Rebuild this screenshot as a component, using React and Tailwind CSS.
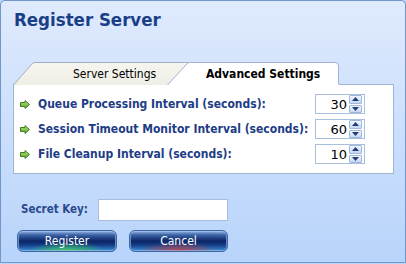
import React from "react";

const font = { fontFamily: '"DejaVu Sans Condensed", "DejaVu Sans", sans-serif' };

function Arrow() {
  return (
    <svg width="10" height="9" viewBox="0 0 10 9" className="shrink-0">
      <defs>
        <linearGradient id="ag" x1="0" y1="0" x2="0" y2="1">
          <stop offset="0" stopColor="#b5e27a" />
          <stop offset="1" stopColor="#5fa82c" />
        </linearGradient>
      </defs>
      <path d="M0.5 2.5 H5 V0.5 L9.5 4.5 L5 8.5 V6.5 H0.5 Z" fill="url(#ag)" stroke="#3f7d22" strokeWidth="1" strokeLinejoin="round" />
    </svg>
  );
}

function Spinner({ value }) {
  return (
    <div className="ml-auto mr-[28px] flex h-[20px] w-[50px] items-center border border-[#a9bfdb] bg-white">
      <div className="flex-1 pr-[2px] text-right text-[13px] leading-none text-black" style={{ fontFamily: '"DejaVu Sans", sans-serif' }}>
        {value}
      </div>
      <div className="mr-[2px] flex h-[18px] w-[13px] flex-col gap-[1px]">
        <div className="flex flex-1 items-center justify-center rounded-[1px] border border-[#9fb8dc] bg-gradient-to-b from-[#f1f6fd] to-[#c5d8f3]">
          <svg width="7" height="4" viewBox="0 0 7 4"><path d="M0 4 L3.5 0 L7 4 Z" fill="#1f3b7a" /></svg>
        </div>
        <div className="flex flex-1 items-center justify-center rounded-[1px] border border-[#9fb8dc] bg-gradient-to-b from-[#f1f6fd] to-[#c5d8f3]">
          <svg width="7" height="4" viewBox="0 0 7 4"><path d="M0 0 L3.5 4 L7 0 Z" fill="#1f3b7a" /></svg>
        </div>
      </div>
    </div>
  );
}

function Row({ label, value }) {
  return (
    <div className="flex h-[20px] items-center pl-[6px]">
      <Arrow />
      <span className="ml-[8px] text-[12px] font-bold text-[#1d3c86]" style={font}>{label}</span>
      <Spinner value={value} />
    </div>
  );
}

function GlassButton({ children, glow, width }) {
  return (
    <button
      className={`flex h-[22px] items-center justify-center rounded-[6px] border border-[#3f64a3] text-[12px] text-white shadow-[inset_0_0_0_1px_rgba(170,200,240,0.6)] ${width} ${glow}`}
      style={{ fontFamily: '"DejaVu Sans Condensed", "DejaVu Sans", sans-serif' }}
    >
      {children}
    </button>
  );
}

export default function App() {
  return (
    <div className="h-[264px] w-[406px] overflow-hidden bg-[#b9d5fb]">
      <div className="flex h-[263px] w-[406px] flex-col rounded-t-[5px] border border-[#7196ca] bg-gradient-to-b from-[#dfeafd] to-[#b8d4fb]">
        <div className="pl-[13px] pt-[7px] text-[18.5px] font-bold leading-[24px] text-[#1b3e88]" style={font}>
          Register Server
        </div>
        <div className="mt-[30px] px-[12px]">
          <div className="relative z-10 -mb-[1px] flex h-[23px]">
            <div className="relative h-[23px] w-[176px]">
              <svg className="absolute left-0 top-0" width="176" height="23" viewBox="0 0 176 23">
                <defs>
                  <linearGradient id="tg" x1="0" y1="0" x2="0" y2="1">
                    <stop offset="0" stopColor="#f6f5ef" />
                    <stop offset="1" stopColor="#efeee6" />
                  </linearGradient>
                </defs>
                <path d="M0.5 23 L19 1.8 Q20 0.5 22 0.5 L175.5 0.5 L175.5 23" fill="url(#tg)" stroke="#a2b0c4" />
              </svg>
              <span className="relative block pl-[60px] pt-[5px] text-[12px] leading-[14px] text-black" style={font}>
                Server Settings
              </span>
            </div>
            <div className="relative -ml-[22px] h-[23px] w-[173px]">
              <svg className="absolute left-0 top-0" width="173" height="23" viewBox="0 0 173 23">
                <path d="M0 23 L20 1.8 Q21 0.5 23 0.5 L168 0.5 Q171.5 0.5 171.5 4 L171.5 23 Z" fill="#ffffff" stroke="none" />
                <path d="M0.5 23 L20 1.8 Q21 0.5 23 0.5 L168 0.5 Q171.5 0.5 171.5 4 L171.5 22" fill="none" stroke="#9db4d4" />
              </svg>
              <span className="relative block pl-[39px] pt-[5px] text-[12px] font-bold leading-[14px] text-black" style={font}>
                Advanced Settings
              </span>
            </div>
          </div>
          <div className="flex h-[90px] w-[381px] flex-col gap-[5px] border border-[#9db4d4] bg-white pt-[9px]">
            <Row label="Queue Processing Interval (seconds):" value="30" />
            <Row label="Session Timeout Monitor Interval (seconds):" value="60" />
            <Row label="File Cleanup Interval (seconds):" value="10" />
          </div>
        </div>
        <div className="mt-[25px] flex items-center pl-[20px]">
          <span className="w-[77px] text-[11.5px] font-bold text-[#2a4a8c]" style={font}>Secret Key:</span>
          <div className="h-[22px] w-[130px] border border-[#a9bfd9] bg-white" />
        </div>
        <div className="mt-[9px] flex gap-[12px] pl-[16px]">
          <GlassButton
            width="w-[100px]"
            glow="bg-[radial-gradient(ellipse_40%_45%_at_50%_100%,rgba(60,200,90,0.95),rgba(60,200,90,0)),linear-gradient(to_bottom,#9ab8e6_0%,#3a63a6_20%,#0b2566_50%,#143c84_70%,#3a8fd6_100%)]"
          >
            Register
          </GlassButton>
          <GlassButton
            width="w-[99px]"
            glow="bg-[radial-gradient(ellipse_40%_45%_at_50%_100%,rgba(190,60,70,0.95),rgba(190,60,70,0)),linear-gradient(to_bottom,#9ab8e6_0%,#3a63a6_20%,#0b2566_50%,#143c84_70%,#3a8fd6_100%)]"
          >
            Cancel
          </GlassButton>
        </div>
      </div>
    </div>
  );
}
